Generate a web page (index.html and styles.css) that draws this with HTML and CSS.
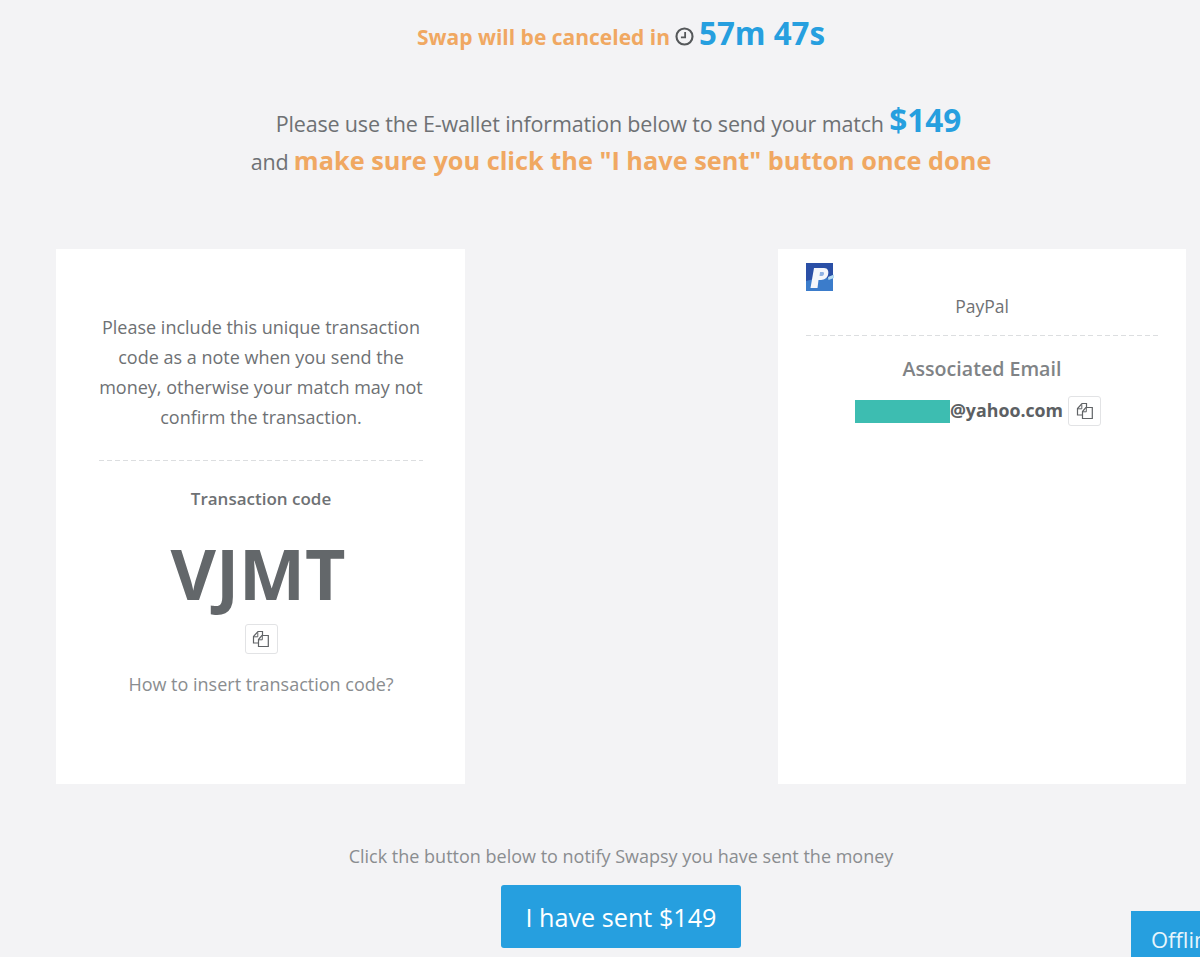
FILE: index.html
```html
<!DOCTYPE html>
<html lang="en">
<head>
    <meta charset="UTF-8">
    <title>Swapsy</title>
    <link rel="stylesheet" href="styles.css">
</head>
<body>

<div class="countdown">
    <span class="countdown-label">Swap will be canceled in</span>
    <svg class="clock" viewBox="0 0 18 18" width="19" height="19">
        <circle cx="9" cy="9" r="7.6" fill="none" stroke="#55585a" stroke-width="2"/>
        <path d="M9.6 4.8V9.8H5.6" fill="none" stroke="#55585a" stroke-width="1.7"/>
    </svg>
    <span class="countdown-time">57m 47s</span>
</div>

<div class="intro">
    <div class="intro-line match-line">Please use the E-wallet information below to send your match <span class="amount">$149</span></div>
    <div class="intro-line warn-line">and <span class="warn">make sure you click the "I have sent" button once done</span></div>
</div>

<div class="cards">
    <div class="card card-code">
        <p class="note">Please include this unique transaction code as a note when you send the money, otherwise your match may not confirm the transaction.</p>
        <div class="dashed"></div>
        <div class="code-label">Transaction code</div>
        <div class="code">VJMT</div>
        <button class="copy-btn">
            <svg viewBox="0 0 18 18" width="18" height="18"><use href="#copy-icon"/></svg>
        </button>
        <div class="how-to">How to insert transaction code?</div>
    </div>

    <div class="card card-wallet">
        <svg class="paypal" viewBox="0 0 28 28" width="28" height="28">
            <rect width="27" height="28" fill="#2a4fa6"/>
            <path d="M0 28V18L12 15L27 15V28Z" fill="#3b7ccb"/>
            <path d="M8 5H18C22 5 23 8.500 22 12C21 16 17 17 14 17H12.500L11.500 25H4.500Z" fill="#f4f6fb"/>
            <path d="M14 9H17C18.500 9 18.500 12.500 16 13H13.500Z" fill="#8fb2e4"/>
            <path d="M22 14L28 11.500V15L22.500 17Z" fill="#b4dbf3"/>
        </svg>
        <div class="wallet-name">PayPal</div>
        <div class="dashed"></div>
        <div class="email-label">Associated Email</div>
        <div class="email-row">
            <span class="redacted"></span><span class="email">@yahoo.com</span>
            <button class="copy-btn">
                <svg viewBox="0 0 18 18" width="18" height="18"><use href="#copy-icon"/></svg>
            </button>
        </div>
    </div>
</div>

<div class="notify">Click the button below to notify Swapsy you have sent the money</div>
<div class="action">
    <button class="sent-btn">I have sent $149</button>
</div>

<div class="offline">Offline</div>

<svg width="0" height="0" class="defs">
    <symbol id="copy-icon" viewBox="0 0 18 18">
        <path d="M6 13H1.500V6.500L6 1.500H10.500V5" fill="none" stroke="#606366" stroke-width="1.200"/>
        <path d="M1.800 6.800H5.800V2.500" fill="none" stroke="#606366" stroke-width="1"/>
        <path d="M9.800 5.500H16.300V16.500H6.500V9.500Z" fill="#fff" stroke="#606366" stroke-width="1.200"/>
        <path d="M6.800 9.800H10.300V6" fill="none" stroke="#606366" stroke-width="1"/>
    </symbol>
</svg>

</body>
</html>
```

FILE: styles.css
```css
html, body {
    height: 100%;
}
body {
    margin: 0;
    height: 957px;
    overflow: hidden;
    background: #f3f3f5;
    font-family: 'Open Sans', sans-serif;
    color: #6e7174;
    position: relative;
}
.defs {
    position: absolute;
}
.countdown {
    display: flex;
    justify-content: center;
    align-items: center;
    gap: 5px;
    height: 44px;
    padding-top: 12px;
    margin-left: 42px;
}
.countdown-label {
    font-size: 21px;
    font-weight: 700;
    color: #f0a862;
    margin-top: 6px;
}
.clock {
    margin-top: 5px;
}
.countdown-time {
    font-size: 31.3px;
    font-weight: 700;
    color: #269fdf;
    margin-bottom: 2px;
}
.intro {
    margin-top: 45px;
    text-align: center;
    font-size: 21.5px;
    letter-spacing: -0.17px;
    margin-left: 42px;
}
.intro-line {
    height: 38.5px;
    line-height: 38.5px;
}
.match-line {
    padding-right: 5px;
}
.warn-line {
    margin-top: 1px;
}
.amount {
    font-size: 31.5px;
    font-weight: 700;
    color: #269fdf;
    letter-spacing: 0;
}
.warn {
    font-size: 25.3px;
    font-weight: 700;
    color: #f0a862;
    letter-spacing: 0;
}
.cards {
    display: flex;
    justify-content: space-between;
    margin-top: 70px;
    padding: 0 14px 0 56px;
}
.card {
    width: 409px;
    height: 535px;
    background: #fff;
    box-sizing: border-box;
    text-align: center;
}
.card-code {
    padding: 63px 42px 0 43px;
}
.card-wallet {
    width: 408px;
    padding: 14px 28px 0;
}
.note {
    margin: 0;
    font-size: 18px;
    line-height: 30px;
}
.dashed {
    height: 1px;
    margin-top: 28px;
    background: repeating-linear-gradient(90deg, #dcdee0 0, #dcdee0 5px, transparent 5px, transparent 8px);
}
.code-label {
    margin-top: 26px;
    font-size: 17px;
    font-weight: 600;
}
.code {
    font-size: 70px;
    font-weight: 700;
    line-height: 102px;
    margin-top: 12px;
    padding-right: 6px;
    color: #63676a;
}
.copy-btn {
    display: inline-flex;
    align-items: center;
    justify-content: center;
    width: 33px;
    height: 30px;
    padding: 0;
    background: #fff;
    border: 1px solid #e2e3e5;
    border-radius: 3px;
}
.how-to {
    margin-top: 18px;
    font-size: 18px;
    color: #8a8d90;
}
.paypal {
    display: block;
}
.wallet-name {
    margin-top: 1px;
    font-size: 17.5px;
    line-height: 28px;
}
.card-wallet .dashed {
    margin-top: 15px;
    background: repeating-linear-gradient(90deg, #dcdee0 0, #dcdee0 5px, transparent 5px, transparent 8.07px);
}
.email-label {
    margin-top: 19px;
    font-size: 19.6px;
    font-weight: 600;
    color: #808386;
}
.email-row {
    display: flex;
    justify-content: center;
    align-items: center;
    margin-top: 14px;
    padding-right: 8px;
}
.redacted {
    width: 95px;
    height: 23px;
    background: #3dbdb1;
}
.email {
    font-size: 17.8px;
    font-weight: 700;
    color: #5c6063;
    margin-right: 5px;
    margin-bottom: 3px;
}
.notify {
    margin-top: 60px;
    text-align: center;
    font-size: 18px;
    color: #8a8d90;
    margin-left: 42px;
}
.action {
    display: flex;
    justify-content: center;
    margin-top: 17px;
    margin-left: 42px;
}
.sent-btn {
    width: 240px;
    height: 63px;
    border: 0;
    border-radius: 3px;
    background: #269fdf;
    color: #fff;
    font-family: inherit;
    font-size: 25.2px;
}
.offline {
    position: absolute;
    left: 1131px;
    top: 911px;
    width: 69px;
    height: 46px;
    background: #269fdf;
    color: #e8f5fc;
    font-size: 22px;
    line-height: 56px;
    padding-left: 20px;
    box-sizing: border-box;
    overflow: hidden;
    white-space: nowrap;
}
```
